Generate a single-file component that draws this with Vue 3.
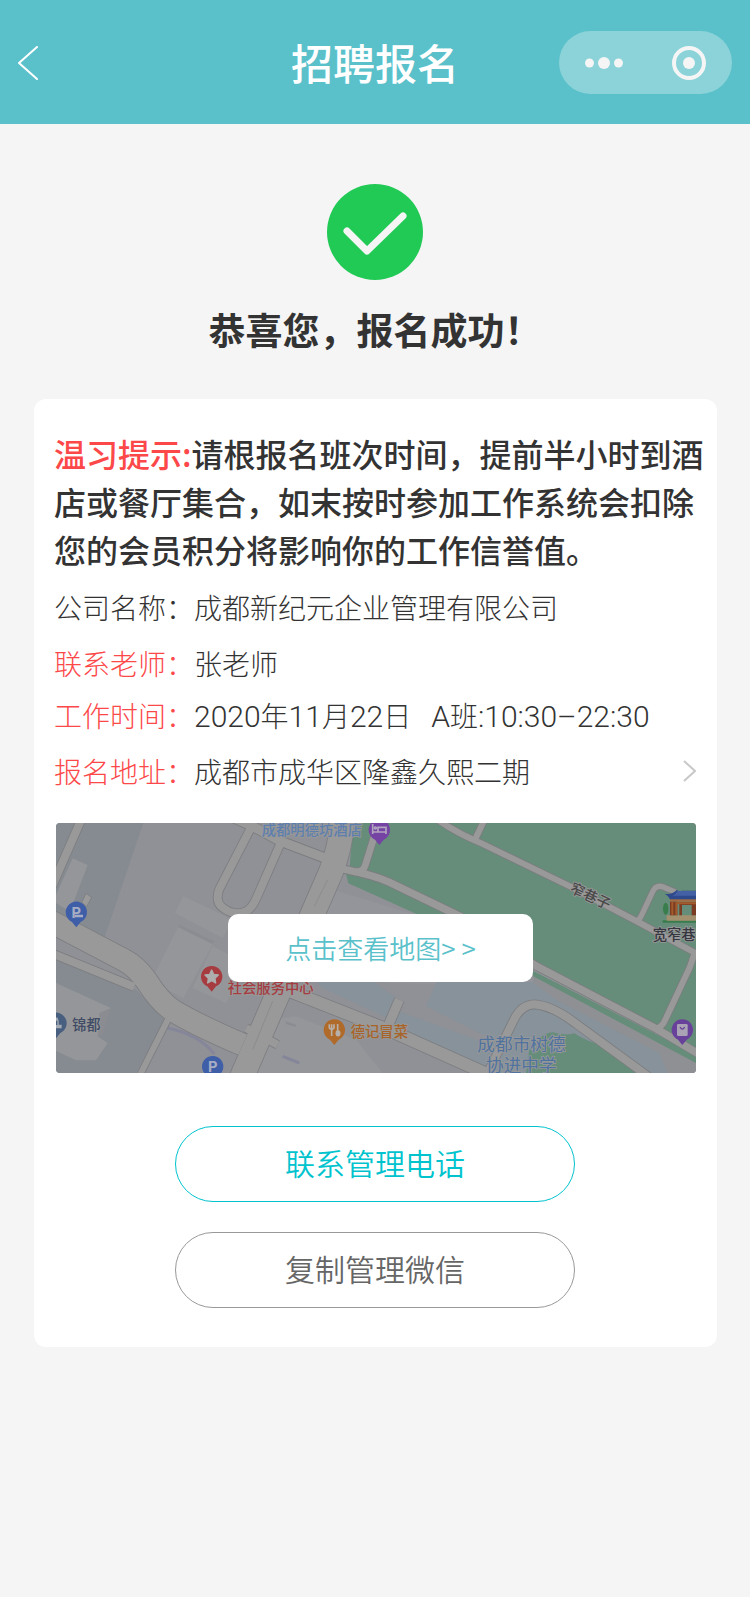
<script setup>
const details = [
  { label: '公司名称：', value: ['成都新纪元企业管理有限公司'], plain: true },
  { label: '联系老师：', value: ['张老师'] },
  { label: '工作时间：', value: ['2020年11月22日', 'A班:10:30–22:30'], tight: true },
  { label: '报名地址：', value: ['成都市成华区隆鑫久熙二期'], link: true },
]

const splitLatin = (text) => text.split(/([A-Z0-9:–]+)/).filter(Boolean)
const isLatin = (text) => /^[A-Z0-9:–]+$/.test(text)

const pins = [
  { id: 'parking-west', x: 61, y: 268, color: '#3f5ea8', kind: 'parking-line' },
  { id: 'parking-south', x: 470, y: 731, color: '#3f5ea8', kind: 'parking' },
  { id: 'service', x: 467, y: 461, color: '#a63c40', kind: 'star' },
  { id: 'jindu', x: 0, y: 601, color: '#485f80', kind: 'building' },
  { id: 'hotel', x: 970, y: 21, color: '#7443a3', kind: 'bed' },
  { id: 'food', x: 835, y: 621, color: '#b06a2a', kind: 'food' },
  { id: 'shop', x: 1879, y: 621, color: '#68429a', kind: 'bag' },
]

const roads = [
  { d: 'M80 -20 L-12 190', w: 24 },
  { d: 'M-10 392 L235 492', w: 24 },
  { d: 'M500 -30 L590 10 L672 54 L815 108', w: 28 },
  { d: 'M582 20 L490 198 Q476 236 500 254 Q540 284 575 262 Q590 252 602 224 L674 60', w: 24 },
  { d: 'M338 585 L250 760', w: 18 },
  { d: 'M570 615 L665 665', w: 24 },
  { d: 'M1030 530 L995 612', w: 28 },
  { d: 'M680 496 L1000 622 L1300 756', w: 36 },
  { d: 'M-30 288 L205 412 Q240 430 272 474 Q310 535 350 562 Q420 605 560 665', w: 66 },
  { d: 'M860 -20 Q855 70 825 146 L671 500 L550 780', w: 72 },
  { d: 'M860 138 Q960 158 1000 178 L1212 280 L1442 430 L1802 618 L1940 700', w: 22 },
  { d: 'M955 40 L928 126 Q922 150 892 146', w: 20 },
  { d: 'M1130 -20 Q1200 30 1272 59 L1542 190 L1752 300 L1940 402', w: 18 },
  { d: 'M1290 -20 L1258 48', w: 18 },
  { d: 'M1738 296 Q1752 290 1758 274 L1790 206 Q1800 184 1822 192 L1860 208', w: 16 },
  { d: 'M1914 396 Q1906 420 1900 436 L1828 590 Q1818 614 1800 616', w: 18 },
  { d: 'M1290 760 L1372 594 Q1394 546 1434 544 Q1490 548 1560 602 L1790 770', w: 24 },
]
</script>

<template>
  <div class="page">
    <header class="topbar">
      <button class="back" type="button" aria-label="返回">
        <svg viewBox="0 0 20 34" width="20" height="34"><path d="M19 1 L1 17 L19 33" /></svg>
      </button>
      <h1>招聘报名</h1>
      <div class="capsule">
        <button type="button" aria-label="更多">
          <svg viewBox="0 0 38 12" width="38" height="12">
            <circle cx="4.500" cy="6" r="4.500" /><circle cx="19" cy="6" r="6" /><circle cx="33.500" cy="6" r="4.500" />
          </svg>
        </button>
        <button type="button" aria-label="关闭">
          <svg viewBox="0 0 34 34" width="34" height="34">
            <circle class="ring" cx="17" cy="17" r="15" /><circle cx="17" cy="17" r="6" />
          </svg>
        </button>
      </div>
    </header>

    <main>
      <section class="result">
        <svg viewBox="0 0 96 96" width="96" height="96" aria-hidden="true">
          <circle cx="48" cy="48" r="48" />
          <path d="M20 47 L40 67 L76 32" />
        </svg>
        <h2>恭喜您，报名成功！</h2>
      </section>

      <section class="card">
        <p class="notice"><strong>温习提示:</strong>请根报名班次时间，提前半小时到酒店或餐厅集合，如末按时参加工作系统会扣除您的会员积分将影响你的工作信誉值。</p>

        <dl class="details">
          <div v-for="row in details" :key="row.label" class="row" :class="{ plain: row.plain, tight: row.tight }">
            <dt>{{ row.label }}</dt>
            <dd>
              <span v-for="text in row.value" :key="text"><span
                v-for="(part, i) in splitLatin(text)" :key="i" :class="{ latin: isLatin(part) }">{{ part }}</span></span>
            </dd>
            <svg v-if="row.link" class="chevron" viewBox="0 0 13 22" width="13" height="22" aria-hidden="true"><path d="M1 1 L12 11 L1 21" /></svg>
          </div>
        </dl>

        <div class="map">
          <svg viewBox="0 0 1920 750" preserveAspectRatio="xMidYMid slice" aria-hidden="true">
            <rect width="1920" height="750" fill="#909196" />
            <path fill="#858b90" d="M0 0H262L145 345L0 270ZM0 400L240 500L325 590L240 750H0Z" />
            <path fill="#95969a" d="M50 106L95 126L42 266L0 240V215ZM382 220L530 290L500 345L357 270ZM370 305L475 355L382 525L285 475ZM470 370L580 425L510 540L410 495ZM0 480L165 555L125 640L155 660L120 712L60 712L0 684ZM650 590L720 580L900 650L980 750H600Z" />
            <path fill="#8b8c92" d="M370 305L475 355L470 364L366 312ZM690 595L720 605L718 612L688 602ZM165 555L140 635L125 640L130 570Z" />
            <path fill="#9a9a9a" stroke="#7f8084" stroke-width="3" d="M90 211L107 223L92 251L77 238Z" />
            <path fill="none" stroke="#85869a" stroke-width="9" d="M335 615Q430 635 475 693M680 700L730 720" />
            <path fill="#94959b" d="M830 200L1080 275L1500 475L1400 490L1000 480L760 400Z" />
            <path fill="#87929a" d="M780 475H950L1022 526L990 582L800 495ZM1027 565L1290 660V738L1005 610ZM1142 476H1432L1920 735V750H1290V640L1110 550Z" />
            <path fill="#8f9094" d="M1432 448L1920 704V750H1835L1810 690L1510 536L1432 480Z" />
            <path fill="#658d79" d="M892 0H1920V695L1802 612L1442 425L1210 275L980 165L880 145ZM867 141L877 181L1082 273H1200L1000 178ZM1425 440L1920 695V720L1432 460ZM1410 750L1420 680Q1455 630 1490 628Q1530 640 1555 631Q1580 650 1660 676L1765 750Z" />
            <path fill="#909196" d="M648 82Q670 66 700 76L780 102Q800 108 790 126L710 300H545ZM560 70L600 34Q650 44 646 66L580 230Q560 254 510 235Q496 222 506 198Z" />
            <g class="roads">
              <path v-for="road in roads" :key="'edge' + road.d" :d="road.d" stroke="#7c7d80" :stroke-width="road.w + 5" />
              <path v-for="road in roads" :key="road.d" :d="road.d" stroke="#999999" :stroke-width="road.w" />
              <path d="M815 170L775 250M650 535L590 680" stroke="#8c8c8e" stroke-width="3" />
            </g>

            <g class="gate">
              <ellipse cx="1829" cy="257" rx="8" ry="18" fill="#397d4c" />
              <path fill="#397d4c" d="M1820 292H1920V299H1820Z" />
              <path fill="#a3906f" d="M1832 277H1920V293H1832Z" />
              <path fill="#a06d45" d="M1842 226H1920V236H1842Z" />
              <path fill="#7a3c22" d="M1842 236H1864V277H1842ZM1870 238H1920V277H1907V246H1878V277H1870Z" />
              <path fill="#a35a2c" d="M1846 236H1852V277H1846ZM1858 236H1864V277H1858ZM1864 238H1920V244H1864Z" />
              <path fill="#2f4a8c" d="M1826 212Q1848 216 1862 201Q1868 206 1878 203H1920V229H1842Q1838 218 1826 212Z" />
              <path fill="#4561a5" d="M1864 204H1920V218H1850Q1860 214 1864 204Z" />
            </g>

            <g class="poi">
              <text x="617" y="36" fill="#5e7fae">成都明德坊酒店</text>
              <text x="515" y="510" fill="#a53c42">社会服务中心</text>
              <text x="48" y="620" fill="#404c66">锦都</text>
              <text x="884" y="643" fill="#a86428">德记冒菜</text>
              <text x="1538" y="206" fill="#484848" transform="rotate(25 1538 206)">窄巷子</text>
              <text x="1790" y="351" fill="#35363f">宽窄巷子</text>
              <text x="1264" y="683" fill="#50729f" class="school">成都市树德</text>
              <text x="1290" y="748" fill="#50729f" class="school">协进中学</text>
            </g>

            <g v-for="pin in pins" :key="pin.id" :transform="`translate(${pin.x} ${pin.y})`">
              <path :fill="pin.color" d="M0 45L-13 29A32 32 0 1 1 13 29Z" />
              <g v-if="pin.kind.startsWith('parking')">
                <text class="letter" x="0" y="16">P</text>
                <path v-if="pin.kind === 'parking-line'" d="M-4 11H20" stroke="#a6adc4" stroke-width="7" />
              </g>
              <path v-else-if="pin.kind === 'star'" fill="#adadad" stroke="#adadad" stroke-width="4" stroke-linejoin="round" d="M0 -20L6 -7L20 -5L10 5L12 19L0 12L-12 19L-10 5L-20 -5L-6 -7Z" />
              <path v-else-if="pin.kind === 'building'" fill="#a5abb3" d="M-14 -14L4 -18L8 -8V4H17V15H-14ZM-2 -8V5H4V-8Z" />
              <g v-else-if="pin.kind === 'bed'" fill="none" stroke="#b1a5bf" stroke-width="5">
                <path d="M-20 -18V12M-20 6H20M20 12V-8H-4V4" /><circle cx="-12" cy="-6" r="3" />
              </g>
              <g v-else-if="pin.kind === 'food'" fill="none" stroke="#b8b0a8" stroke-width="5">
                <path d="M-15 -17V-6Q-8 2 -1 -6V-17M-8 -17V18M10 -18V8" /><ellipse cx="11" cy="10" rx="5" ry="7" fill="#b8b0a8" />
              </g>
              <g v-else>
                <rect x="-16" y="-18" width="32" height="36" rx="4" fill="#aaa3b5" />
                <path d="M-7 -9Q0 4 7 -9" fill="none" stroke="#68429a" stroke-width="4" />
              </g>
            </g>
          </svg>
          <button class="open-map" type="button">点击查看地图&gt; &gt;</button>
        </div>

        <div class="actions">
          <button class="call" type="button">联系管理电话</button>
          <button class="copy" type="button">复制管理微信</button>
        </div>
      </section>
    </main>
  </div>
</template>

<style>
body {
  background: #f5f5f5;
}
</style>

<style scoped>
.page {
  min-height: 100vh;
  background: #f5f5f5;
  color: #333;
  font-family: "Noto Sans CJK SC", sans-serif;
}
button {
  padding: 0;
  border: 0;
  background: none;
  color: inherit;
  font: inherit;
  cursor: pointer;
}
svg {
  display: block;
}
h1, h2, p, dl, dd {
  margin: 0;
}
.topbar {
  display: grid;
  grid-template-columns: 1fr auto 1fr;
  align-items: center;
  box-sizing: border-box;
  height: 124px;
  padding: 1px 18px 0;
  background: #5ac1cb;
}
.back {
  justify-self: start;
}
.back path {
  fill: none;
  stroke: #fff;
  stroke-width: 2;
  stroke-linecap: round;
  stroke-linejoin: round;
}
h1 {
  padding-bottom: 2px;
  color: #fff;
  font-size: 42px;
  font-weight: 500;
  line-height: 60px;
}
.capsule {
  justify-self: end;
  display: flex;
  align-items: center;
  justify-content: space-between;
  box-sizing: border-box;
  width: 173px;
  height: 63px;
  padding: 0 26px;
  border-radius: 32px;
  background: #8bd3d9;
}
.capsule circle {
  fill: #f5f5f5;
}
.capsule .ring {
  fill: none;
  stroke: #f5f5f5;
  stroke-width: 4;
}
.result {
  display: flex;
  flex-direction: column;
  align-items: center;
  gap: 21px;
  padding: 60px 0 42px;
}
.result circle {
  fill: #21c955;
}
.result path {
  fill: none;
  stroke: #f5f5f5;
  stroke-width: 7;
  stroke-linecap: round;
  stroke-linejoin: round;
}
h2 {
  font-size: 37px;
  font-weight: 700;
  line-height: 56px;
}
.card {
  margin: 0 33px 0 34px;
  padding: 30px 21px 39px 20px;
  border-radius: 12px;
  background: #fff;
}
.notice {
  margin-right: -8px;
  font-size: 32px;
  font-weight: 500;
  line-height: 48px;
}
.notice strong {
  color: #fc4849;
  font-weight: 500;
}
.details {
  display: flex;
  flex-direction: column;
  gap: 16px;
  margin-top: 14px;
  font-size: 28px;
  font-weight: 300;
  line-height: 40px;
}
.row {
  display: flex;
  align-items: center;
  height: 40px;
}
.row.tight {
  margin-top: -4px;
}
dt {
  color: #fc4849;
}
.plain dt {
  color: #333;
}
dd {
  display: flex;
  flex: 1;
  gap: 20px;
}
.latin {
  font-family: Roboto, sans-serif;
  font-size: 30px;
  line-height: 1;
}
.chevron path {
  fill: none;
  stroke: #c8c8c8;
  stroke-width: 2;
}
.map {
  position: relative;
  height: 250px;
  margin: 32px 0 0 2px;
  border-radius: 4px;
  overflow: hidden;
}
.map > svg {
  width: 100%;
  height: 100%;
}
.roads path {
  fill: none;
  stroke-linejoin: round;
}
.poi text {
  stroke: #999;
  stroke-width: 5;
  paint-order: stroke;
  font-size: 43px;
  font-weight: 500;
}
.poi .school {
  font-size: 53px;
  font-weight: 400;
}
.letter {
  fill: #a6adc4;
  font-family: Inter, sans-serif;
  font-size: 44px;
  font-weight: 700;
  text-anchor: middle;
}
.open-map {
  position: absolute;
  top: 91px;
  left: 172px;
  width: 305px;
  height: 68px;
  padding-bottom: 2px;
  border-radius: 10px;
  background: #fff;
  color: #5ac1cb;
  font-size: 26px;
  font-weight: 350;
}
.actions {
  display: flex;
  flex-direction: column;
  align-items: center;
  gap: 30px;
  margin-top: 53px;
}
.actions button {
  width: 400px;
  height: 76px;
  padding-bottom: 4px;
  border: 1px solid;
  border-radius: 38px;
  font-size: 30px;
  font-weight: 350;
}
.call {
  color: #00c3ce;
}
.actions .copy {
  border-color: #999;
  color: #666;
}
</style>
